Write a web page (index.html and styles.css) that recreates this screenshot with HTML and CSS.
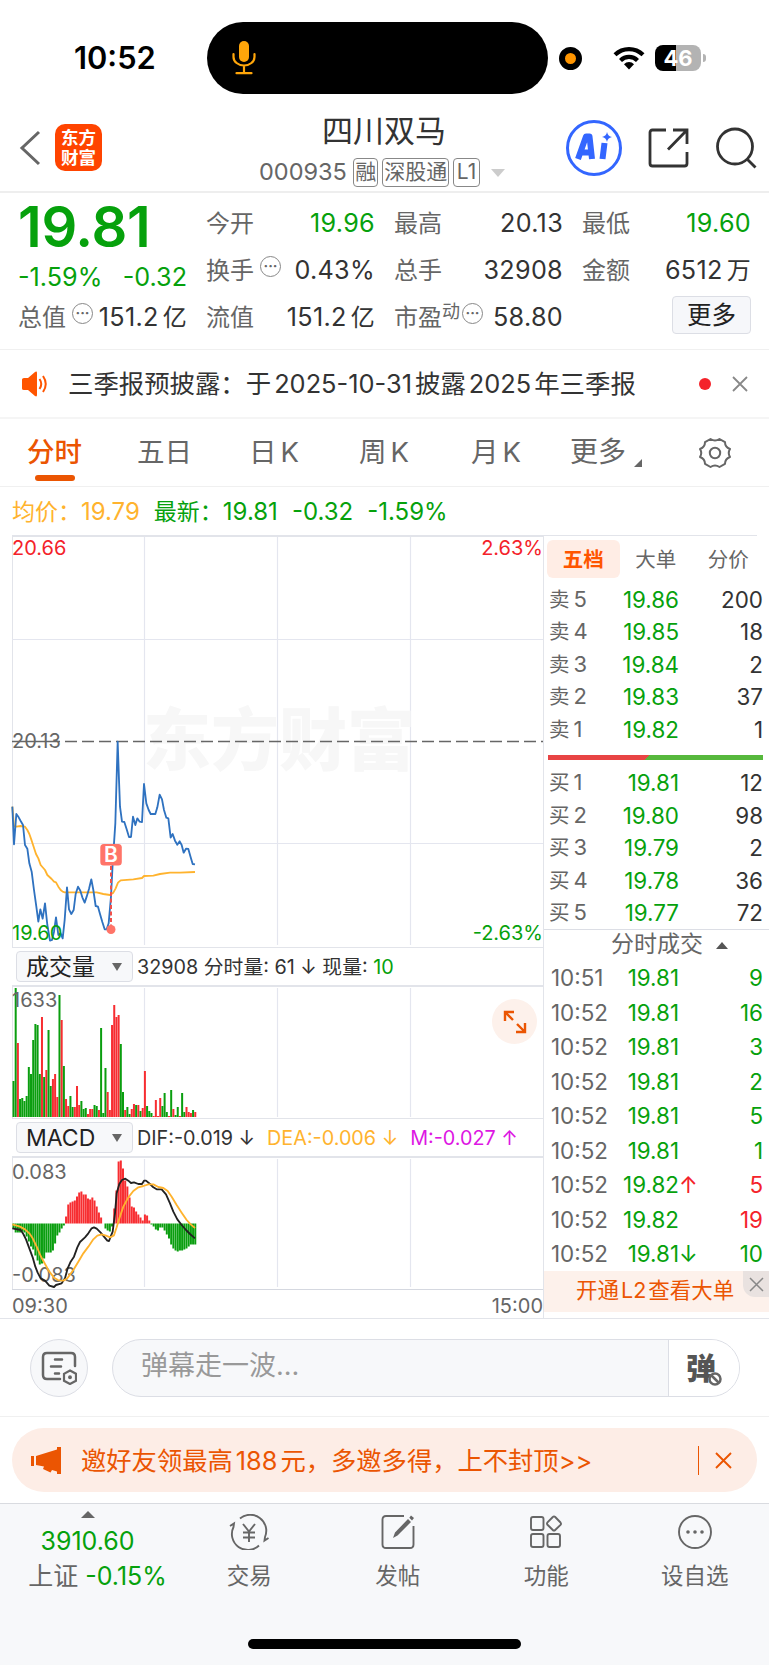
FILE: index.html
```html
<!doctype html>
<html lang="zh-CN">
  <head>
    <meta charset="UTF-8" />
    <meta name="viewport" content="width=device-width, initial-scale=1.0" />
    <title>四川双马 000935</title>
    <link rel="stylesheet" href="styles.css">
  </head>
  <body>
    <div class="status-bar">
      <span class="clock">10:52</span>
      <div class="island">
        <svg width="24" height="34" viewBox="0 0 24 34" fill="none" stroke="#ffa60a" stroke-width="2.2" stroke-linecap="round">
          <rect x="7" y="0" width="10" height="21" rx="5" fill="#ffa60a" stroke="none" />
          <path d="M1.500 13v3a10.500 8.500 0 0 0 21 0v-3M12 25v6.500M4.500 32.200h15" />
        </svg>
      </div>
      <span class="rec-dot"></span>
      <svg class="wifi" width="32" height="24" viewBox="0 0 32 24" fill="none" stroke="#000" stroke-width="4.200">
        <path d="M2 8.800a20 20 0 0 1 28 0M7.500 14.500a12 12 0 0 1 17 0" />
        <path d="M16 23.500l-5-5.300a7 7 0 0 1 10 0z" fill="#000" stroke="none" />
      </svg>
      <div class="battery">46</div>
      <span class="battery-tip"></span>
    </div>

    <div class="header">
      <svg class="back" width="22" height="36" viewBox="0 0 22 36" fill="none" stroke="#666" stroke-width="3">
        <path d="M20 2L3 18l17 16" />
      </svg>
      <div class="logo"><span>东方</span><span>财富</span></div>
      <div class="title">
        <h1>四川双马</h1>
        <div class="code">
          <span class="code-num">000935</span>
          <span class="tag">融</span>
          <span class="tag">深股通</span>
          <span class="tag tag-l1">L1</span>
          <svg class="code-arrow" width="14" height="8" viewBox="0 0 14 8"><path d="M0 0h14l-7 8z" fill="#ccc" /></svg>
        </div>
      </div>
      <svg class="ai" width="58" height="58" viewBox="0 0 58 58">
        <circle cx="29" cy="29" r="26.500" fill="none" stroke="#3366ff" stroke-width="3" />
        <g fill="none" stroke="#3366ff" stroke-width="6" stroke-linejoin="round">
          <path d="M13 40l8-22.500h3.500L27 40M17.500 33.500H27M39.500 24l-2 16" />
        </g>
        <path d="M42 13q1 4.500 5 5q-4.500 1-5 5q-1-4.500-5-5q4.500-1 5-5z" fill="#3366ff" />
      </svg>
      <svg class="share" width="42" height="42" viewBox="0 0 42 42" fill="none" stroke="#333" stroke-width="2.800">
        <path d="M18 3H4.500Q2 3 2 5.500v31Q2 39 4.500 39h32q2.500 0 2.500-2.500V25M25 3h14v14M38.500 3.500L20 22.500" />
      </svg>
      <svg class="search" width="42" height="42" viewBox="0 0 42 42" fill="none" stroke="#333" stroke-width="2.800">
        <circle cx="20" cy="19.500" r="17.500" /><path d="M32 32l8.500 8.500" />
      </svg>
    </div>

    <div class="quote">
      <div class="quote-main">
        <div class="price">19.81</div>
        <div class="change"><span>-1.59%</span><span>-0.32</span></div>
      </div>
      <div class="cell"><label>今开</label><b class="down">19.96</b></div>
      <div class="cell"><label>最高</label><b>20.13</b></div>
      <div class="cell"><label>最低</label><b class="down">19.60</b></div>
      <div class="cell"><label>换手<i class="more-dot">···</i></label><b>0.43%</b></div>
      <div class="cell"><label>总手</label><b>32908</b></div>
      <div class="cell"><label>金额</label><b>6512<em>万</em></b></div>
      <div class="cell"><label>总值<i class="more-dot">···</i></label><b>151.2<em>亿</em></b></div>
      <div class="cell"><label>流值</label><b>151.2<em>亿</em></b></div>
      <div class="cell"><label>市盈<sup>动</sup><i class="more-dot">···</i></label><b>58.80</b></div>
      <div class="cell cell-btn"><button class="btn-more">更多</button></div>
    </div>

    <div class="notice">
      <svg width="26" height="28" viewBox="0 0 26 28" fill="none" stroke="#ff5500" stroke-width="2">
        <path d="M0 9.500Q0 8 2 8h4l7-6q2-1.300 2 1v22q0 2.300-2 1L6 20H2q-2 0-2-1.500z" fill="#ff5500" stroke="none" />
        <path d="M17.500 9q3.500 5 0 10M21 6q5.500 8 0 16" />
      </svg>
      <p>三季报预披露：于<span>2025-10-31</span>披露<span>2025</span>年三季报</p>
      <span class="red-dot"></span>
      <svg width="16" height="16" viewBox="0 0 16 16" stroke="#888" stroke-width="1.800"><path d="M1 1l14 14M15 1L1 15" /></svg>
    </div>

    <div class="tabs">
      <span class="tab active">分时</span>
      <span class="tab">五日</span>
      <span class="tab">日<i>K</i></span>
      <span class="tab">周<i>K</i></span>
      <span class="tab">月<i>K</i></span>
      <span class="tab tab-more">更多<svg width="8" height="8" viewBox="0 0 8 8"><path d="M8 0v8H0z" fill="#666" /></svg></span>
      <svg class="gear" width="32" height="32" viewBox="0 0 32 32" fill="none" stroke="#666" stroke-width="2" stroke-linejoin="round">
        <path d="M11.500 2q4.500 3 9 0l5.500 3.200q0 4.800 5 6.800q-2.500 4 0 8q-5 2-5 6.800L20.500 30q-4.500-3-9 0L6 26.800q0-4.800-5-6.800q2.500-4 0-8q5-2 5-6.800z" />
        <circle cx="16" cy="16" r="5.200" />
      </svg>
    </div>

    <div class="legend">
      <span class="avg">均价：<i>19.79</i></span>
      <span class="down">最新：<i>19.81</i></span>
      <span class="down"><i>-0.32</i></span>
      <span class="down"><i>-1.59%</i></span>
    </div>

    <div class="market">
      <div class="charts">
        <svg class="chart" width="532" height="412" viewBox="1 2 531 410">
          <path class="grid" d="M132.500 2v408M265.500 2v408M398.500 2v408M0 104.500h531M0 308.500h531" />
          <text class="watermark" x="131" y="230">东方财富</text>
          <path d="M53 206.500h478" stroke="#666" stroke-width="1.500" stroke-dasharray="12 5" />
          <path d="M0 206.500h48" stroke="#666" stroke-width="1.500" />
          <g class="line" transform="translate(-12 155) scale(.33333)">
            <polyline class="avg-line" points="37,350 42,408 49,410 62,408 75,410 82,420 88,432 95,452 108,492 115,505 122,525 135,540 142,555 155,567 162,575 168,577 175,590 182,600 188,605 194,607 290,607 310,612 330,615 340,608 347,595 354,578 362,571 400,568 426,564 432,558 460,557 480,552 510,548 540,548 585,546" />
            <polyline class="price-line" points="37,350 42,463 49,372 56,382 62,393 69,405 75,465 82,476 88,520 95,545 102,600 109,650 115,695 121,658 128,686 135,640 142,705 150,752 156,750 162,725 168,682 175,735 182,730 188,745 194,690 201,592 207,658 214,672 221,660 227,612 234,590 241,602 247,622 254,638 260,620 267,597 274,568 280,600 287,648 294,650 300,672 307,696 314,718 320,718 326,700 333,620 338,520 346,400 353,155 357,270 360,350 366,395 373,396 380,418 387,441 393,441 399,380 406,405 412,385 419,395 426,396 432,282 439,340 446,360 452,372 466,372 472,352 479,314 486,328 492,360 499,383 505,385 512,443 518,432 525,452 532,464 539,454 545,465 551,488 558,476 565,477 572,502 578,522 585,523" />
          </g>
          <path d="M99 331v60" stroke="#f0504a" stroke-width="2" stroke-dasharray="4 2.500" />
          <circle cx="99" cy="394.500" r="4.500" fill="#ff7468" />
          <rect x="88.300" y="309" width="21.500" height="21.500" rx="3.500" fill="#ff7468" />
          <text class="buy-mark" x="99" y="327">B</text>
          <text class="up" x="0" y="20">20.66</text>
          <text class="up" x="531" y="20" text-anchor="end">2.63%</text>
          <text x="0" y="213">20.13</text>
          <text class="down" x="0" y="405">19.60</text>
          <text class="down" x="531" y="405" text-anchor="end">-2.63%</text>
        </svg>

        <div class="indicator">
          <span class="select">成交量<i></i></span>
          <span class="stat">32908 分时量: 61 ↓ 现量: <b class="down">10</b></span>
        </div>
        <div class="chart-box">
          <svg class="chart" width="532" height="133" viewBox="1 2 531 131">
            <path class="grid" d="M132.500 3v129M265.500 3v129M398.500 3v129" />
            <g id="volume-bars"></g>
            <text x="0" y="22">1633</text>
          </svg>
          <span class="expand">
            <svg width="24" height="24" viewBox="0 0 24 24" fill="none" stroke="#eb5502" stroke-width="2.400">
              <path d="M2 11V2h9M2 2l8 8M22 13v9h-9M22 22l-8-8" />
            </svg>
          </span>
        </div>

        <div class="indicator">
          <span class="select">MACD<i></i></span>
          <span class="stat">DIF:-0.019 ↓</span>
          <span class="stat avg">DEA:-0.006 ↓</span>
          <span class="stat macd">M:-0.027 ↑</span>
        </div>
        <svg class="chart" width="532" height="133" viewBox="1 1 531 131">
          <path class="grid" d="M132.500 2v128M265.500 2v128M398.500 2v128" />
          <g id="macd-bars"></g>
          <text x="0" y="22">0.083</text>
          <text x="0" y="125">-0.083</text>
          <g class="line" transform="translate(-12 -47) scale(.33333)">
            <polyline class="dif-line" points="37,355 62,360 70,372 78,388 88,415 98,442 106,470 113,488 122,505 135,512 148,527 162,531 168,525 185,520 195,505 203,475 212,455 222,440 232,412 240,396 255,382 265,370 275,355 282,352 290,356 302,368 312,380 322,392 327,393 332,380 338,365 345,310 350,250 358,222 366,210 376,206 385,212 393,219 402,217 415,222 426,222 432,212 438,212 450,222 460,232 470,238 485,238 498,253 510,280 520,305 532,328 545,345 558,360 570,372 585,385" />
            <polyline class="avg-line" points="37,343 60,350 75,358 88,370 98,385 110,410 122,438 135,462 148,485 162,503 175,511 190,512 202,505 220,480 235,455 250,430 265,410 280,388 292,377 305,373 318,377 330,382 342,376 350,352 358,325 370,290 385,262 400,243 415,232 430,228 445,223 460,223 475,231 490,234 503,243 515,260 530,285 545,308 560,330 572,343 585,354" />
          </g>
        </svg>
        <div class="time-axis"><span>09:30</span><span>15:00</span></div>
      </div>

      <div class="book">
        <div class="book-tabs"><span class="on">五档</span><span>大单</span><span>分价</span></div>
        <div class="levels">
          <div class="row"><label>卖<i>5</i></label><span class="down">19.86</span><b>200</b></div>
          <div class="row"><label>卖<i>4</i></label><span class="down">19.85</span><b>18</b></div>
          <div class="row"><label>卖<i>3</i></label><span class="down">19.84</span><b>2</b></div>
          <div class="row"><label>卖<i>2</i></label><span class="down">19.83</span><b>37</b></div>
          <div class="row"><label>卖<i>1</i></label><span class="down">19.82</span><b>1</b></div>
        </div>
        <div class="ratio"></div>
        <div class="levels">
          <div class="row"><label>买<i>1</i></label><span class="down">19.81</span><b>12</b></div>
          <div class="row"><label>买<i>2</i></label><span class="down">19.80</span><b>98</b></div>
          <div class="row"><label>买<i>3</i></label><span class="down">19.79</span><b>2</b></div>
          <div class="row"><label>买<i>4</i></label><span class="down">19.78</span><b>36</b></div>
          <div class="row"><label>买<i>5</i></label><span class="down">19.77</span><b>72</b></div>
        </div>
        <div class="trades-title">分时成交<svg width="12" height="7" viewBox="0 0 12 7"><path d="M0 7h12L6 0z" fill="#555" /></svg></div>
        <div class="trades">
          <div class="row"><label>10:51</label><span class="down">19.81</span><b class="down">9</b></div>
          <div class="row"><label>10:52</label><span class="down">19.81</span><b class="down">16</b></div>
          <div class="row"><label>10:52</label><span class="down">19.81</span><b class="down">3</b></div>
          <div class="row"><label>10:52</label><span class="down">19.81</span><b class="down">2</b></div>
          <div class="row"><label>10:52</label><span class="down">19.81</span><b class="down">5</b></div>
          <div class="row"><label>10:52</label><span class="down">19.81</span><b class="down">1</b></div>
          <div class="row"><label>10:52</label><span class="down">19.82</span><em class="up">↑</em><b class="up">5</b></div>
          <div class="row"><label>10:52</label><span class="down">19.82</span><b class="up">19</b></div>
          <div class="row"><label>10:52</label><span class="down">19.81</span><em class="down">↓</em><b class="down">10</b></div>
        </div>
        <div class="l2-banner">
          开通<i>L2</i>查看大单
          <span class="l2-close"><svg width="15" height="15" viewBox="0 0 15 15" stroke="#888" stroke-width="1.500"><path d="M1 1l13 13M14 1L1 14" /></svg></span>
        </div>
      </div>
    </div>

    <div class="danmu">
      <span class="danmu-set">
        <svg width="36" height="34" viewBox="0 0 36 34" fill="none" stroke="#666" stroke-width="2.500" stroke-linecap="round">
          <path d="M19 28H6q-4 0-4-4V6q0-4 4-4h24q4 0 4 4v9M14 8.500h7M10 15.500h10M14 22.500h4" />
          <path d="M29 19.500l6 3.300v7L29 33l-6-3.200v-7z" stroke-width="2.200" />
          <circle cx="29" cy="26.300" r="1.200" fill="#666" stroke-width="1.500" />
        </svg>
      </span>
      <div class="danmu-input">
        <span class="placeholder">弹幕走一波...</span>
        <span class="danmu-toggle">弹
          <svg width="16" height="16" viewBox="0 0 16 16"><circle cx="8" cy="8" r="5.500" fill="#fff" stroke="#666" stroke-width="2.500" /><path d="M4.500 4.500l7 7" stroke="#666" stroke-width="2.500" /></svg>
        </span>
      </div>
    </div>

    <div class="promo-wrap">
      <div class="promo">
        <svg width="30" height="27" viewBox="0 0 30 27" fill="#eb5502">
          <path d="M0 9h3v10H0zM5 9L26 2.500V0h4v27h-4v-2.500L21 23l-1.500 2.500L12 22l1-2.500L5 18z" />
        </svg>
        <p>邀好友领最高<span>188</span>元，多邀多得，上不封顶&gt;&gt;</p>
        <span class="promo-line"></span>
        <svg width="17" height="17" viewBox="0 0 17 17" stroke="#eb5502" stroke-width="1.900"><path d="M1 1l15 15M16 1L1 16" /></svg>
      </div>
    </div>

    <div class="bottom-bar">
      <div class="index">
        <svg width="14" height="7" viewBox="0 0 14 7"><path d="M0 7h14L7 0z" fill="#666" /></svg>
        <div class="down index-value">3910.60</div>
        <div class="index-name">上证<span class="down">-0.15%</span></div>
      </div>
      <div class="nav">
        <svg width="40" height="36" viewBox="0 0 40 36" fill="none" stroke="#666" stroke-width="1.900">
          <path d="M11 4.500a16 16 0 0 1 25 18.500l-.5 3.500 4-2.500M30 31.500A16 16 0 0 1 4.500 13L5 9.500 1 12" />
          <path d="M14 10l6 7.500 6-7.500M20 17.500V28M14 18.500h12M14 23.500h12" />
        </svg>
        <span>交易</span>
      </div>
      <div class="nav">
        <svg width="34" height="36" viewBox="0 0 34 36" fill="none" stroke="#666" stroke-width="1.900">
          <path d="M23 2H5Q1.500 2 1.500 5.500v25Q1.500 34 5 34h24q3.500 0 3.500-3.500V12" />
          <path d="M12 24l2-5.500L27 5l3 3-13.500 13.500zM28.300 3.700L30 1.500l3 2.500-2 2.500z" fill="#666" stroke="none" />
        </svg>
        <span>发帖</span>
      </div>
      <div class="nav">
        <svg width="34" height="36" viewBox="0 0 34 36" fill="none" stroke="#666" stroke-width="1.900">
          <rect x="2" y="3" width="12.500" height="13" rx="2" /><rect x="2" y="20" width="12.500" height="13" rx="2" /><rect x="18.500" y="20" width="12.500" height="13" rx="2" />
          <path d="M23.800 3q1.200-1.300 2.400 0l5.300 5.500q1 1.200 0 2.400L26.200 16q-1.200 1.300-2.400 0l-5.300-5.200q-1-1.200 0-2.400z" />
        </svg>
        <span>功能</span>
      </div>
      <div class="nav">
        <svg width="36" height="36" viewBox="0 0 36 36" fill="#666">
          <circle cx="18" cy="18" r="16" fill="none" stroke="#666" stroke-width="1.900" />
          <circle cx="11" cy="18" r="1.800" /><circle cx="18" cy="18" r="1.800" /><circle cx="25" cy="18" r="1.800" />
        </svg>
        <span>设自选</span>
      </div>
      <div class="home-indicator"></div>
    </div>

    <script src="charts.js"></script>
  </body>
</html>
```
FILE: styles.css
```css
* {
  box-sizing: border-box;
}

body {
  margin: 0;
  width: 769px;
  height: 1665px;
  overflow: hidden;
  background: #fff;
  color: #333;
  font-family: Inter, "Noto Sans CJK SC", sans-serif;
  line-height: 1.3;
  display: flex;
  flex-direction: column;
}

i,
em {
  font-style: normal;
}

b {
  font-weight: 400;
}

p,
h1 {
  margin: 0;
}

svg {
  flex: none;
}

.up {
  color: #f4222a;
  fill: #f4222a;
}

.down {
  color: #06a10c;
  fill: #06a10c;
}

.avg {
  color: #ffb32e;
}

.macd {
  color: #dd16e3;
}

/* status bar */
.status-bar {
  height: 108px;
  padding-top: 8px;
  display: flex;
  align-items: center;
}

.clock {
  width: 207px;
  padding-left: 74px;
  font-size: 30.800px;
  font-weight: 600;
  color: #000;
}

.island {
  width: 341px;
  height: 72px;
  border-radius: 36px;
  background: #000;
  padding-left: 25px;
  display: flex;
  align-items: center;
}

.rec-dot {
  width: 23px;
  height: 23px;
  margin-left: 11px;
  border-radius: 50%;
  border: 6px solid #000;
  background: #ff9500;
}

.wifi {
  margin-left: 31px;
}

.battery {
  width: 46px;
  height: 26px;
  margin-left: 10px;
  border-radius: 8px;
  background: linear-gradient(90deg, #000 46%, #b3b3b3 46%);
  color: #fff;
  font-size: 22px;
  font-weight: 700;
  line-height: 26px;
  text-align: center;
}

.battery-tip {
  width: 3px;
  height: 8px;
  margin-left: 2px;
  border-radius: 0 3px 3px 0;
  background: #b3b3b3;
}

/* header */
.header {
  height: 85px;
  padding: 0 11px 0 19px;
  border-bottom: 2px solid #eee;
  display: flex;
  align-items: center;
}

.back {
  margin-bottom: 3px;
}

.logo {
  width: 47px;
  height: 47px;
  margin: -4px 0 0 14px;
  border-radius: 10px;
  background: #ff4400;
  color: #fff;
  font-size: 17.500px;
  font-weight: 700;
  line-height: 20px;
  display: flex;
  flex-direction: column;
  align-items: center;
  justify-content: center;
}

.title {
  width: 246px;
  margin-left: 157px;
  display: flex;
  flex-direction: column;
}

.title h1 {
  padding-left: 63px;
  font-size: 31px;
  font-weight: 400;
  line-height: 42px;
}

.code {
  height: 38px;
  padding-top: 4px;
  display: flex;
  align-items: center;
  gap: 4px;
  color: #666;
  font-size: 21px;
}

.code-num {
  width: 91px;
  font-size: 23.500px;
}

.tag {
  height: 29px;
  padding: 0 1px;
  border: 1.500px solid #888;
  border-radius: 4px;
  line-height: 26px;
  white-space: nowrap;
}

.tag-l1 {
  width: 27px;
  text-align: center;
}

.code-arrow {
  margin-left: 7px;
}

.ai {
  margin: -3px 0 0 60px;
}

.share {
  margin: -3px 0 0 25px;
}

.search {
  margin: -3px 0 0 25px;
}

/* quote */
.quote {
  height: 157px;
  padding: 7px 0 0 18px;
  border-bottom: 1px solid #f0f0f0;
  display: grid;
  grid-template-columns: repeat(4, 169px);
  grid-template-rows: repeat(3, 47px);
  column-gap: 19px;
  font-size: 25.200px;
}

.quote-main {
  grid-row: span 2;
  color: #06a10c;
}

.price {
  font-size: 56px;
  font-weight: 600;
  line-height: 54px;
  letter-spacing: -0.300px;
}

.change {
  display: flex;
  justify-content: space-between;
  line-height: 46px;
}

.cell {
  display: flex;
  align-items: center;
  justify-content: space-between;
  white-space: nowrap;
}

.cell b {
  letter-spacing: 0.300px;
}

.cell label {
  color: #666;
  font-size: 24px;
  display: flex;
  align-items: center;
}

.cell em {
  margin-left: 4px;
  font-size: 24px;
}

.cell sup {
  font-size: 18px;
  line-height: 18px;
  margin-bottom: 12px;
}

.more-dot {
  width: 21px;
  height: 21px;
  margin: 0 0 9px 6px;
  border: 1.500px solid #888;
  border-radius: 50%;
  font-size: 14px;
  font-weight: 700;
  line-height: 17px;
  text-align: center;
}

.cell sup + .more-dot {
  margin-left: 2px;
}

.cell-btn {
  justify-content: flex-end;
}

.btn-more {
  width: 79px;
  height: 38px;
  margin-bottom: 5px;
  padding: 0;
  border: 1.500px solid #dcdee5;
  border-radius: 4px;
  background: #f6f7fa;
  color: #222;
  font: inherit;
  font-size: 24.500px;
  line-height: 36px;
}

/* notice */
.notice {
  height: 69px;
  padding: 0 21px 0 22px;
  border-bottom: 2px solid #f5f5f5;
  display: flex;
  align-items: center;
}

.notice p {
  width: 609px;
  padding-left: 20px;
  font-size: 25.400px;
  white-space: nowrap;
}

.notice p span {
  margin: 0 3px;
}

.red-dot {
  width: 12px;
  height: 12px;
  margin: 0 21px 0 43px;
  border-radius: 50%;
  background: #f4222a;
}

/* period tabs */
.tabs {
  height: 68px;
  padding-left: 27px;
  border-bottom: 1px solid #f0f0f0;
  display: flex;
  align-items: center;
  color: #666;
  font-size: 27.500px;
}

.tab {
  width: 110px;
  height: 67px;
  line-height: 67px;
  display: flex;
}

.tab:nth-child(3) {
  width: 108px;
}

.tab:nth-child(3),
.tab:nth-child(4),
.tab:nth-child(5) {
  margin-left: 2px;
}

.tab:nth-child(5) {
  width: 99px;
}

.tab i {
  margin-left: 4px;
}

.tab.active {
  position: relative;
  color: #eb5502;
  font-weight: 500;
}

.tab.active::after {
  content: "";
  position: absolute;
  left: 8px;
  bottom: 5px;
  width: 40px;
  height: 6px;
  border-radius: 3px;
  background: #eb5502;
}

.tab-more {
  width: 129px;
  font-size: 28px;
}

.tab-more svg {
  margin: 40px 0 0 8px;
}

/* chart legend */
.legend {
  height: 48px;
  padding: 1px 0 0 12px;
  display: flex;
  align-items: center;
  gap: 14px;
  font-size: 23px;
  white-space: nowrap;
}

.legend i {
  font-size: 24px;
}

/* market */
.market {
  height: 784px;
  border-bottom: 1px solid #e2e4ea;
  display: flex;
}

.charts {
  width: 544px;
  padding-left: 12px;
  border-right: 1px solid #e2e4ea;
}

.chart {
  display: block;
  border-left: 1px solid #e2e4ea;
  border-top: 2px solid #e2e4ea;
  overflow: visible;
}

.chart text {
  font-size: 20px;
  fill: #666;
}

.chart text.up {
  fill: #f4222a;
}

.chart text.down {
  fill: #06a10c;
}

.chart .watermark {
  font-size: 68px;
  font-weight: 900;
  fill: #f7f7f7;
}

.chart .buy-mark {
  font-size: 21px;
  font-weight: 600;
  fill: #fff;
  text-anchor: middle;
}

.grid {
  fill: none;
  stroke: #e4e6ef;
  stroke-width: 1.200;
}

.line polyline {
  fill: none;
  stroke-width: 5.500;
  stroke-linejoin: round;
}

.line .price-line {
  stroke: #2f72c0;
}

.line .avg-line {
  stroke: #ffb32e;
}

.line .dif-line {
  stroke: #222;
}

.bar-up {
  fill: #f72d31;
}

.bar-down {
  fill: #0a9e0f;
}

.indicator {
  height: 38px;
  padding-left: 4px;
  border-top: 1px solid #e2e4ea;
  display: flex;
  align-items: center;
  font-size: 19.800px;
  white-space: nowrap;
}

.select {
  width: 117px;
  height: 31px;
  margin-right: 4px;
  padding: 0 10px 0 9px;
  border: 1.500px solid #dcdee5;
  border-radius: 4px;
  background: #f7f8fa;
  font-size: 23px;
  line-height: 28px;
  color: #222;
  display: flex;
  align-items: center;
  justify-content: space-between;
}

.select i {
  border: 5px solid transparent;
  border-top: 8px solid #666;
  border-bottom: 0;
}

.stat {
  margin-right: 12px;
  padding-top: 2px;
}

.chart-box {
  position: relative;
}

.expand {
  position: absolute;
  right: 6px;
  top: 14px;
  width: 45px;
  height: 45px;
  border-radius: 50%;
  background: #fdf1eb;
  display: flex;
  align-items: center;
  justify-content: center;
}

.time-axis {
  height: 29px;
  padding-top: 3px;
  border-top: 1px solid #d5d8e0;
  display: flex;
  justify-content: space-between;
  align-items: center;
  color: #666;
  font-size: 20px;
}

/* order book */
.book {
  width: 225px;
  font-size: 22.400px;
}

.book-tabs {
  width: 213px;
  height: 48px;
  padding: 4px 0 5px 3px;
  border-top: 1px solid #e2e4ea;
  display: flex;
  color: #666;
  font-size: 20.500px;
  line-height: 39px;
  text-align: center;
}

.book-tabs span {
  flex: none;
  width: 72.500px;
}

.book-tabs .on {
  border-radius: 6px;
  background: #ffede5;
  color: #ff5500;
  font-weight: 700;
}

.row {
  padding: 0 6px 0 5px;
  display: flex;
  align-items: center;
}

.levels .row {
  height: 32.500px;
}

.trades .row {
  height: 34.500px;
  padding-left: 7px;
}

.row label {
  width: 60px;
  color: #666;
  white-space: nowrap;
}

.trades label {
  width: 58px;
}

.row label i {
  margin-left: 4px;
  font-size: 22px;
}

.levels label {
  font-size: 20.500px;
}

.row span {
  width: 70px;
  text-align: right;
}

.row em {
  width: 16px;
  margin-right: -16px;
}

.row b {
  flex: 1;
  text-align: right;
}

.ratio {
  height: 5px;
  margin: 9px 6px 7px 4px;
  background: linear-gradient(135deg, #e84444 46%, #56b83c 46%);
}

.trades-title {
  height: 31.500px;
  padding-left: 67px;
  border-top: 1.500px solid #dcdee5;
  display: flex;
  align-items: center;
  gap: 13px;
  color: #666;
  font-size: 23px;
}

.l2-banner {
  position: relative;
  height: 41px;
  padding-left: 32px;
  background: #fdf1eb;
  color: #eb5502;
  font-size: 21.500px;
  line-height: 38px;
}

.l2-banner i {
  margin: 0 2px;
}

.l2-close {
  position: absolute;
  right: 0;
  top: 0;
  width: 26px;
  height: 26px;
  border-radius: 0 0 0 12px;
  background: #e9e2e0;
  display: flex;
  align-items: center;
  justify-content: center;
}

/* danmu */
.danmu {
  height: 98px;
  padding: 0 29px 0 30px;
  border-bottom: 1px solid #f0f0f0;
  display: flex;
  align-items: center;
  justify-content: space-between;
}

.danmu-set {
  width: 58px;
  height: 58px;
  border: 1px solid #dcdee5;
  border-radius: 50%;
  background: #f7f8fa;
  display: flex;
  align-items: center;
  justify-content: center;
}

.danmu-input {
  width: 628px;
  height: 58px;
  border: 1px solid #dcdee5;
  border-radius: 29px;
  background: #f7f8fa;
  overflow: hidden;
  display: flex;
}

.placeholder {
  flex: 1;
  padding-left: 28px;
  color: #999;
  font-size: 27px;
  line-height: 52px;
}

.danmu-toggle {
  position: relative;
  width: 71px;
  padding-left: 17px;
  border-left: 1px solid #dcdee5;
  background: #fff;
  color: #555;
  font-size: 30px;
  font-weight: 900;
  line-height: 56px;
}

.danmu-toggle svg {
  position: absolute;
  left: 38px;
  top: 31px;
}

/* promo */
.promo-wrap {
  height: 87px;
  padding: 11px 12px;
  border-bottom: 1px solid #d9dbe0;
}

.promo {
  height: 64px;
  padding: 0 25px 0 19px;
  border-radius: 32px;
  background: #fdede6;
  color: #eb5502;
  display: flex;
  align-items: center;
}

.promo p {
  flex: 1;
  padding: 2px 0 0 20px;
  font-size: 25.300px;
  white-space: nowrap;
}

.promo p span {
  margin: 0 3px;
}

.promo-line {
  width: 1.500px;
  height: 29px;
  margin-right: 16px;
  background: #eb5502;
}

/* bottom bar */
.bottom-bar {
  position: relative;
  flex: 1;
  padding: 7px 0 0 14px;
  background: #f7f8fa;
  display: flex;
}

.index {
  width: 161px;
  padding-right: 14px;
  display: flex;
  flex-direction: column;
  align-items: center;
  font-size: 25px;
}

.index-value {
  height: 40px;
  line-height: 46px;
}

.index-name {
  margin: 0 -12px;
  padding-left: 20px;
  line-height: 36px;
  color: #666;
  white-space: nowrap;
}

.index-name .down {
  margin-left: 7px;
}

.nav {
  width: 148.500px;
  padding-top: 3px;
  display: flex;
  flex-direction: column;
  align-items: center;
  gap: 9px;
  color: #666;
  font-size: 22.500px;
  line-height: 34px;
}

.home-indicator {
  position: absolute;
  left: 248px;
  bottom: 16px;
  width: 273px;
  height: 10px;
  border-radius: 5px;
  background: #000;
}
```
FILE: charts.js
```js
// one bar per minute, g = down, r = up
const volume =
  "36g 129g 74r 18g 19g 16g 21g 50g 43g 77g 93g 92g 43g 100r 40g 47r 87g 31g 38r 43r 20r 122g 97r 51g " +
  "18r 11r 21g 10g 10r 31r 12r 16g 8g 9g 3r 8r 8r 12g 11g 7r 89g 4g 49g 25r 7r 92r 112r 100r 102r 73g " +
  "25g 7r 10g 3g 8r 13r 12g 12r 6g 9r 46r 11g 6g 4g 1r 17r 1r 19r 11g 24g 5g 1r 27g 8r 2g 10g 1r 24g " +
  "5g 10r 5r 4r 7g 5r";

const macd = [
  -5, -9, -9, -9, -8, -9, -13, -18, -23, -26, -32, -37, -41, -40, -35, -29, -29, -29, -27, -20, -12, -9, -5, -2,
  7, 19, 21, 22, 23, 27, 31, 32, 29, 29, 25, 24, 26, 23, 17, 11, 6, 0, -5, -7, -8, -3, 15, 33, 62, 63, 55, 43,
  37, 26, 17, 16, 12, 9, 6, 3, 9, 8, 3, -1, -3, -6, -7, -4, -4, -7, -11, -15, -21, -25, -27, -28, -27, -27, -26,
  -25, -23, -21, -21, -21,
];

const STEP = 2.19;

function addBar(group, i, y, height, up) {
  const rect = document.createElementNS("http://www.w3.org/2000/svg", "rect");
  rect.setAttribute("x", (0.5 + i * STEP).toFixed(2));
  rect.setAttribute("y", y);
  rect.setAttribute("width", 2);
  rect.setAttribute("height", height);
  rect.setAttribute("class", up ? "bar-up" : "bar-down");
  group.appendChild(rect);
}

const volumeGroup = document.getElementById("volume-bars");
volume.split(" ").forEach((item, i) => {
  const h = parseInt(item, 10);
  addBar(volumeGroup, i, 132 - h, h, item.endsWith("r"));
});

const macdGroup = document.getElementById("macd-bars");
macd.forEach((v, i) => {
  addBar(macdGroup, i, v > 0 ? 66.5 - v : 66.5, Math.abs(v), v > 0);
});
```
